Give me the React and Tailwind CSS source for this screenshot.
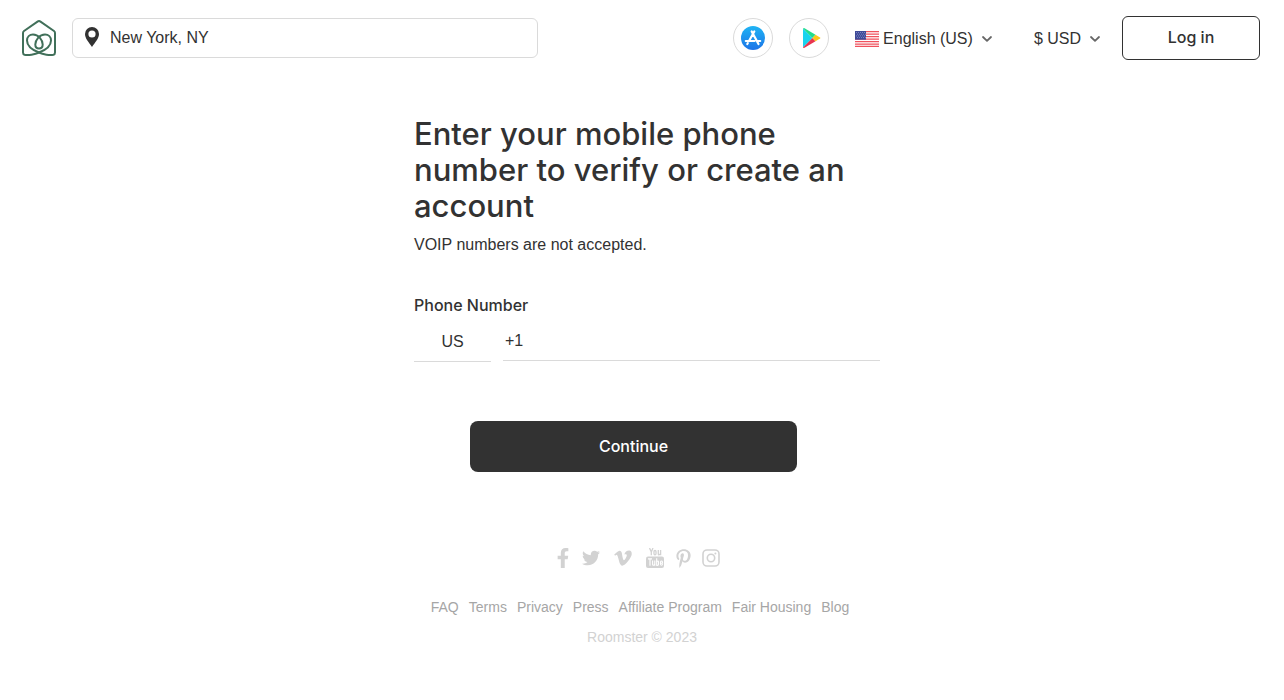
import { useState } from "react";
import { FaFacebookF, FaTwitter, FaVimeoV, FaPinterestP } from "react-icons/fa";

const Logo = () => (
  <svg width="34" height="36" viewBox="0 0 34 36" fill="none" stroke="#41705a" strokeWidth="2" strokeLinecap="round" strokeLinejoin="round">
    <path d="M17 32.500C13 34.500 6 35.500 2.500 34.700Q1 34.300 1 32.500V13Q1 11.800 2 11L15.500 1.600Q17 .6 18.500 1.600L32 11Q33 11.800 33 13V32.500Q33 34.300 31.500 34.700C28 35.500 21 34.500 17 32.500Z" />
    <path d="M17 32.500C9 29.500 5 25 5 20.500C5 17 7.500 14.500 11 14.500C16.500 14.500 20.700 20 20.700 24.500C20.700 27 19.200 28.500 17 28.500S13.300 27 13.300 24.500C13.300 20 17.500 14.500 23 14.500C26.500 14.500 29 17 29 20.500C29 25 25 29.500 17 32.500Z" />
  </svg>
);

const PinIcon = () => (
  <svg width="14" height="22" viewBox="0 0 14 22" fill="#323232">
    <path fillRule="evenodd" d="M7 0a7 7 0 0 0-7 7c0 4.500 4 8.500 7 13c3-4.500 7-8.500 7-13a7 7 0 0 0-7-7Zm0 3.400a3.600 3.600 0 1 1 0 7.200a3.600 3.600 0 0 1 0-7.200Z" />
  </svg>
);

const AppStoreIcon = () => (
  <svg width="24" height="24" viewBox="0 0 24 24">
    <defs>
      <linearGradient id="store" x1="0" y1="0" x2="0" y2="1">
        <stop offset="0" stopColor="#1fb4f4" />
        <stop offset="1" stopColor="#1d74e8" />
      </linearGradient>
    </defs>
    <circle cx="12" cy="12" r="12" fill="url(#store)" />
    <g stroke="#fff" strokeWidth="2.200" strokeLinecap="round">
      <path d="M13.300 5.500L8 15M10.700 5.500L17.500 18M4.800 15H13.500M17 15H19.200M6.800 17.200L6.300 18" />
    </g>
  </svg>
);

const PlayIcon = () => (
  <svg width="18" height="20" viewBox="0 0 18 20">
    <path d="M0 .6V19.400L9.400 10Z" fill="#19d3ee" />
    <path d="M0 .6Q.8-.3 2 .4L12.500 6.800L9.400 10Z" fill="#22dc8b" />
    <path d="M0 19.400Q.8 20.300 2 19.600L12.500 13.200L9.400 10Z" fill="#e8344e" />
    <path d="M12.500 6.800L17 9.400Q18 10 17 10.600L12.500 13.200L9.400 10Z" fill="#fcc71c" />
  </svg>
);

const FlagIcon = () => (
  <svg width="24" height="16" viewBox="0 0 24 16">
    <rect width="24" height="16" fill="#fff" />
    <path d="M0 .6H24M0 3.100H24M0 5.600H24M0 8.100H24M0 10.600H24M0 13.100H24M0 15.400H24" stroke="#f0525e" strokeWidth="1.300" />
    <rect width="11" height="8.700" fill="#3f4a98" />
    <path d="M1 1.500H11M2 3.200H11M1 4.900H11M2 6.600H11" stroke="#a9b0dc" strokeWidth=".7" strokeDasharray=".8 1.200" />
  </svg>
);

const Chevron = () => (
  <svg width="10" height="6" viewBox="0 0 10 6" fill="none" stroke="#666" strokeWidth="1.800" strokeLinecap="round" strokeLinejoin="round">
    <path d="M1 1L5 4.800L9 1" />
  </svg>
);

const YoutubeIcon = () => (
  <svg width="18" height="20" viewBox="0 0 18 20" fill="none" stroke="currentColor" strokeWidth="1.300">
    <path d="M3.500 0L5.300 4V7.300M7 0L5.300 4" />
    <rect x="8" y="2.500" width="2" height="4.300" rx="1" />
    <path d="M12.300 2V6Q12.300 7 13.300 6.700L14.600 5.800M14.600 2V7.300" />
    <rect x="0" y="8.500" width="18" height="11.500" rx="2" fill="currentColor" stroke="none" />
    <g stroke="#fff" strokeWidth="1.100">
      <path d="M2 10.900H6M4 10.900V17.800M6.600 12.500V16.500Q6.800 17.600 8 17L8.800 16.300M8.800 12.500V17.800M10.700 10.300V17.800" />
      <path d="M10.700 13.500Q12.500 12.200 12.500 14V16Q12.500 18 10.700 17M14.500 15.200H16.500V14Q16.300 13 15.500 13T14.500 14V16.200Q14.600 17.200 15.500 17.200T16.500 16" />
    </g>
  </svg>
);

const InstagramIcon = () => (
  <svg width="18" height="18" viewBox="0 0 18 18" fill="none" stroke="currentColor" strokeWidth="1.600">
    <rect x="1" y="1" width="16" height="16" rx="4" />
    <circle cx="9" cy="9" r="3.700" />
    <circle cx="13.400" cy="4.500" r="1" fill="currentColor" stroke="none" />
  </svg>
);

const socials = [
  { name: "Facebook", icon: <FaFacebookF size={20} />, width: "w-3" },
  { name: "Twitter", icon: <FaTwitter size={18} />, width: "w-5" },
  { name: "Vimeo", icon: <FaVimeoV size={20} />, width: "w-5" },
  { name: "YouTube", icon: <YoutubeIcon />, width: "w-5" },
  { name: "Pinterest", icon: <FaPinterestP size={19} />, width: "w-3" },
  { name: "Instagram", icon: <InstagramIcon />, width: "w-5" },
];

const links = ["FAQ", "Terms", "Privacy", "Press", "Affiliate Program", "Fair Housing", "Blog"];

const Header = () => {
  const [place, setPlace] = useState("New York, NY");

  return (
    <header className="flex items-center justify-between pt-4 pl-[22px] pr-6">
      <div className="flex flex-1 items-center gap-4">
        <a href="#" aria-label="Roomster home" className="shrink-0">
          <Logo />
        </a>
        <label className="flex h-10 w-full max-w-[466px] items-center gap-[11px] rounded-md border border-[#dadada] px-3">
          <PinIcon />
          <input
            aria-label="Location"
            value={place}
            onChange={(e) => setPlace(e.target.value)}
            className="min-w-0 flex-1 bg-transparent outline-none"
          />
        </label>
      </div>

      <div className="flex items-center">
        <a href="#" aria-label="App Store" className="flex size-10 items-center justify-center rounded-full border border-[#dadada]">
          <AppStoreIcon />
        </a>
        <a href="#" aria-label="Google Play" className="ml-4 flex size-10 items-center justify-center rounded-full border border-[#dadada] pl-1.5">
          <PlayIcon />
        </a>
        <button type="button" className="ml-[26px] flex items-center pt-0.5">
          <FlagIcon />
          <span className="ml-1 mr-[9px]">English (US)</span>
          <Chevron />
        </button>
        <button type="button" className="ml-[42px] flex items-center pt-0.5">
          <span className="mr-[9px]">$ USD</span>
          <Chevron />
        </button>
        <button type="button" className="ml-[22px] h-11 w-[138px] rounded-md border border-[#323232] pb-0.5 font-['Inter',sans-serif] font-medium">
          Log in
        </button>
      </div>
    </header>
  );
};

const PhoneForm = () => {
  const [phone, setPhone] = useState("+1");

  return (
    <form className="mx-auto w-full max-w-[476px] pl-[10px]" onSubmit={(e) => e.preventDefault()}>
      <h1 className="font-['Inter',sans-serif] text-[31px] leading-9 font-medium">
        Enter your mobile phone number to verify or create an account
      </h1>
      <p className="mt-[9px]">VOIP numbers are not accepted.</p>

      <label htmlFor="phone" className="mt-9 block font-['Inter',sans-serif] font-medium">
        Phone Number
      </label>
      <div className="mt-[5px] flex items-start gap-3">
        <button type="button" aria-label="Country" className="h-10 w-[77px] border-b border-[#dadada]">
          US
        </button>
        <input
          id="phone"
          type="tel"
          value={phone}
          onChange={(e) => setPhone(e.target.value)}
          className="h-[39px] min-w-0 flex-1 border-b border-[#dadada] px-0.5 outline-none"
        />
      </div>

      <button type="submit" className="ml-14 mt-[59px] h-[51px] w-[327px] rounded-lg bg-[#323232] pb-0.5 font-['Inter',sans-serif] font-medium text-white">
        Continue
      </button>
    </form>
  );
};

const Footer = () => (
  <footer className="mt-[76px] flex flex-col items-center pb-12 text-sm">
    <div className="flex h-5 items-center gap-3 pr-1.5 text-[#d2d2d2]">
      {socials.map((s) => (
        <a key={s.name} href="#" aria-label={s.name} className={`${s.width} flex justify-center [&>svg]:shrink-0`}>
          {s.icon}
        </a>
      ))}
    </div>
    <nav className="mt-[29px] flex gap-[10px] pr-1 text-[#a6a6a6]">
      {links.map((l) => (
        <a key={l} href="#">{l}</a>
      ))}
    </nav>
    <p className="mt-[10px] text-[#d2d2d2]">Roomster © 2023</p>
  </footer>
);

const App = () => (
  <div className="min-h-screen bg-white font-['Liberation_Sans',Arial,sans-serif] text-base text-[#323232]">
    <Header />
    <main className="pt-14">
      <PhoneForm />
    </main>
    <Footer />
  </div>
);

export default App;
